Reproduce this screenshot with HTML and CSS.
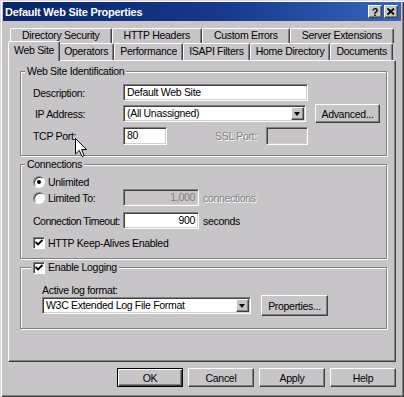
FILE: index.html
```html
<!DOCTYPE html>
<html lang="en">
<head>
  <meta charset="UTF-8" />
  <title>Default Web Site Properties</title>
  <link rel="stylesheet" href="styles.css">
</head>
<body>

  <div class="window">
    <div class="titlebar">
      <span class="title">Default Web Site Properties</span>
      <span class="title-btn">?</span>
      <span class="title-btn">
        <svg width="8" height="7" viewBox="0 0 8 7"><path d="M0.5 0.5 L7 6.5 M7 0.5 L0.5 6.5" stroke="#000" stroke-width="1.8"/></svg>
      </span>
    </div>

    <div class="tabs">
      <div class="tab-row back">
        <div class="tab">Directory Security</div>
        <div class="tab">HTTP Headers</div>
        <div class="tab">Custom Errors</div>
        <div class="tab">Server Extensions</div>
      </div>
      <div class="tab-row front">
        <div class="tab active">Web Site</div>
        <div class="tab">Operators</div>
        <div class="tab">Performance</div>
        <div class="tab">ISAPI Filters</div>
        <div class="tab">Home Directory</div>
        <div class="tab">Documents</div>
      </div>
    </div>

    <div class="panel">
      <fieldset class="group ident">
        <legend>Web Site Identification</legend>
        <div class="body">
          <div class="row">
            <span class="lbl">Description:</span>
            <div class="field desc">Default Web Site</div>
          </div>
          <div class="row ip">
            <span class="lbl indent">IP Address:</span>
            <div class="combo ip-combo">
              <span class="combo-text">(All Unassigned)</span>
              <span class="combo-arrow"></span>
            </div>
            <div class="btn advanced">Advanced...</div>
          </div>
          <div class="row tcp">
            <span class="lbl">TCP Port:</span>
            <div class="field port">80</div>
            <span class="ssl-lbl disabled">SSL Port:</span>
            <div class="field ssl off"></div>
          </div>
        </div>
      </fieldset>

      <fieldset class="group conn">
        <legend>Connections</legend>
        <div class="body">
          <div class="row opt">
            <span class="radio on"></span>
            <span>Unlimited</span>
          </div>
          <div class="row limit">
            <span class="lbl radio-lbl"><span class="radio"></span>Limited To:</span>
            <div class="field num off">1,000</div>
            <span class="unit disabled">connections</span>
          </div>
          <div class="row timeout">
            <span class="lbl tight">Connection Timeout:</span>
            <div class="field num">900</div>
            <span class="unit">seconds</span>
          </div>
          <div class="row opt keep">
            <span class="check">
              <svg width="8" height="7" viewBox="0 0 8 7"><path d="M0.5 3 L3 5.5 L7.5 1" fill="none" stroke="#000" stroke-width="1.8"/></svg>
            </span>
            <span>HTTP Keep-Alives Enabled</span>
          </div>
        </div>
      </fieldset>

      <fieldset class="group logging">
        <legend>
          <span class="check">
            <svg width="8" height="7" viewBox="0 0 8 7"><path d="M0.5 3 L3 5.5 L7.5 1" fill="none" stroke="#000" stroke-width="1.8"/></svg>
          </span>
          <span>Enable Logging</span>
        </legend>
        <div class="body">
          <div class="log-lbl">Active log format:</div>
          <div class="row log-row">
            <div class="combo log-combo">
              <span class="combo-text">W3C Extended Log File Format</span>
              <span class="combo-arrow"></span>
            </div>
            <div class="btn props">Properties...</div>
          </div>
        </div>
      </fieldset>
    </div>

    <div class="buttons">
      <div class="btn default">OK</div>
      <div class="btn">Cancel</div>
      <div class="btn">Apply</div>
      <div class="btn">Help</div>
    </div>

    <svg class="cursor" width="13" height="20" viewBox="0 0 13 20">
      <path d="M0.5 0.5 L0.5 16 L4.3 12.4 L7 18.6 L9.2 17.6 L6.6 11.6 L11.5 11.6 Z" fill="#fff" stroke="#000" stroke-width="1"/>
    </svg>
  </div>

</body>
</html>
```

FILE: styles.css
```css
* {
  margin: 0; padding: 0; box-sizing: border-box;
}

html, body {
  width: 404px;
  height: 397px;
  overflow: hidden;
  background: #c8c5c8;
  font-family: "Liberation Sans", Arial, sans-serif;
  font-size: 10.5px;
  letter-spacing: -0.3px;
  color: #000;
}

.window {
  position: relative;
  width: 404px;
  height: 397px;
  padding: 2px 3px 0;
  box-shadow: inset 1px 1px 0 #dcd9dc, inset 2px 2px 0 #fff,
              inset -1px -1px 0 #404040, inset -2px -2px 0 #808080;
}

/* title bar */

.titlebar {
  display: flex;
  align-items: center;
  height: 19px;
  padding: 0 3px 0 2px;
  background: linear-gradient(to right, #0a246a 0%, #16398a 55%, #3466bd 100%);
  color: #fff;
  font-weight: bold;
  font-size: 11px;
}

.title {
  flex: 1;
  letter-spacing: -0.25px;
}

.title-btn {
  display: flex;
  align-items: center;
  justify-content: center;
  width: 14px;
  height: 13px;
  margin-left: 2px;
  background: #c8c5c8;
  color: #000;
  font-size: 11px;
  border: 1px solid;
  border-color: #fff #404040 #404040 #fff;
  box-shadow: inset -1px -1px 0 #808080;
}

/* tabs */

.tabs {
  margin-top: 7px;
}

.tab-row {
  display: flex;
}

.tab-row.back {
  height: 15px;
  padding: 0 7px;
}

.tab-row.front {
  height: 17px;
  padding: 0 8px 0 7px;
}

.tab {
  flex: 1 1 auto;
  text-align: center;
  white-space: nowrap;
  border: 1px solid;
  border-bottom: 0;
  border-color: #fff #404040 transparent #fff;
  border-radius: 2px 2px 0 0;
  box-shadow: inset -1px 0 0 #808080;
  background: #c8c5c8;
  line-height: 13px;
}

.front .tab {
  line-height: 15px;
}

.tab.active {
  position: relative;
  z-index: 1;
  height: 20px;
  margin: -2px -2px -1px;
  line-height: 17px;
}

/* page */

.panel {
  height: 302px;
  margin: 0 5px;
  padding: 4px 8px 0 11px;
  border: 1px solid;
  border-color: #fff #404040 #404040 #fff;
  box-shadow: inset -1px -1px 0 #808080;
}

.group {
  min-width: 0;
  border: 1px solid #808080;
  box-shadow: inset 1px 1px 0 #fff, 1px 1px 0 #fff;
}

.group legend {
  margin-left: 4px;
  padding: 0 2px;
  line-height: 13px;
  background: #c8c5c8;
}

.ident { height: 91px; }
.conn { height: 101px; margin-top: 2px; }
.logging { height: 68px; margin-top: 2px; }

.ident .body { padding: 6px 0 0 12px; }
.conn .body { padding: 4px 0 0 12px; }
.logging .body { padding: 10px 0 0 21px; }

.row {
  display: flex;
  align-items: center;
  white-space: nowrap;
}

.lbl {
  width: 90px;
  flex-shrink: 0;
}

.lbl.indent {
  padding-left: 2px;
}

.lbl.tight {
  letter-spacing: -0.5px;
}

.disabled {
  color: #808080;
  text-shadow: 1px 1px 0 #fff;
}

/* inputs */

.field {
  height: 17px;
  padding: 0 3px;
  line-height: 14px;
  background: #fff;
  border: 1px solid;
  border-color: #808080 #fff #fff #808080;
  box-shadow: inset 1px 1px 0 #404040, inset -1px -1px 0 #d4d0c8;
}

.field.off {
  background: #c8c5c8;
  color: #808080;
}

.desc { width: 185px; }

.row.ip { margin-top: 3px; height: 19px; }
.row.tcp { margin-top: 4px; height: 18px; }

.port { width: 44px; height: 18px; }

.ssl-lbl {
  width: 51px;
  margin-left: 48px;
}

.ssl { width: 42px; height: 18px; }

.combo {
  display: flex;
  height: 17px;
  padding: 1px;
  background: #fff;
  border: 1px solid;
  border-color: #808080 #fff #fff #808080;
  box-shadow: inset 1px 1px 0 #404040, inset -1px -1px 0 #d4d0c8;
}

.combo-text {
  flex: 1;
  padding-left: 2px;
  line-height: 13px;
}

.combo-arrow {
  position: relative;
  width: 13px;
  background: #c8c5c8;
  border: 1px solid;
  border-color: #fff #404040 #404040 #fff;
  box-shadow: inset -1px -1px 0 #808080;
}

.combo-arrow::after {
  content: "";
  position: absolute;
  left: 2px;
  top: 4px;
  border-left: 3.5px solid transparent;
  border-right: 3.5px solid transparent;
  border-top: 4px solid #000;
}

.ip-combo { width: 183px; }
.log-combo { width: 209px; }

.btn {
  display: flex;
  align-items: center;
  justify-content: center;
  height: 19px;
  background: #c8c5c8;
  border: 1px solid;
  border-color: #fff #404040 #404040 #fff;
  box-shadow: inset -1px -1px 0 #808080;
}

.advanced {
  width: 65px;
  margin-left: 9px;
}

/* connections */

.radio {
  position: relative;
  display: inline-block;
  width: 12px;
  height: 12px;
  margin-right: 3px;
  border-radius: 50%;
  background: #fff;
  border: 1px solid;
  border-color: #808080 #fff #fff #808080;
  box-shadow: inset 1px 1px 0 #404040;
  vertical-align: middle;
}

.radio.on::after {
  content: "";
  position: absolute;
  left: 3px;
  top: 3px;
  width: 4px;
  height: 4px;
  border-radius: 50%;
  background: #000;
}

.row.opt {
  height: 13px;
}

.radio-lbl {
  display: flex;
  align-items: center;
}

.row.limit { margin-top: 1px; height: 17px; }
.row.timeout { margin-top: 6px; height: 17px; }
.row.keep { margin-top: 7px; }

.num {
  width: 76px;
  text-align: right;
}

.unit {
  margin-left: 4px;
}

.check {
  display: inline-flex;
  align-items: center;
  justify-content: center;
  width: 12px;
  height: 12px;
  margin-right: 3px;
  background: #fff;
  border: 1px solid;
  border-color: #808080 #fff #fff #808080;
  box-shadow: inset 1px 1px 0 #404040;
  vertical-align: middle;
}

/* logging */

.logging legend {
  display: flex;
  align-items: center;
  margin-left: 10px;
}

.log-lbl {
  line-height: 12px;
}

.row.log-row {
  height: 21px;
  margin-top: -1px;
}

.props {
  width: 67px;
  height: 21px;
  margin-left: 10px;
}

/* dialog buttons */

.buttons {
  display: flex;
  justify-content: flex-end;
  gap: 5px;
  margin-top: 6px;
  padding-right: 5px;
}

.buttons .btn {
  width: 66px;
}

.btn.default {
  border-color: #000;
  box-shadow: inset 1px 1px 0 #fff, inset -1px -1px 0 #404040, inset -2px -2px 0 #808080;
}

.cursor {
  position: absolute;
  left: 75px;
  top: 138px;
}
```
